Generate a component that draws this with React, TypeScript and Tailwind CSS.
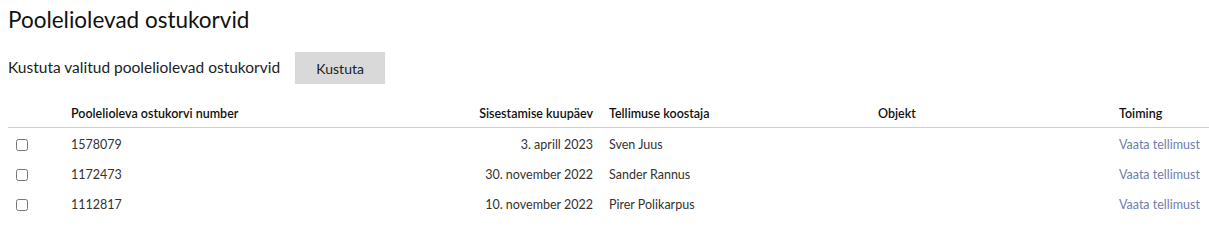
const rows = [
  { id: '1578079', date: '3. aprill 2023', author: 'Sven Juus' },
  { id: '1172473', date: '30. november 2022', author: 'Sander Rannus' },
  { id: '1112817', date: '10. november 2022', author: 'Pirer Polikarpus' },
];

const cols = 'grid grid-cols-[55px_330px_208px_269px_241px_1fr] whitespace-nowrap';

export default function App() {
  return (
    <div className="bg-white pl-2 pt-[6px] font-['Lato',sans-serif] text-[#222]">
      <h1 className="text-[22.5px] leading-[28px] text-[#111]">Pooleliolevad ostukorvid</h1>

      <div className="mt-[18px] flex items-center gap-[15px]">
        <span className="text-[15.5px]">Kustuta valitud pooleliolevad ostukorvid</span>
        <button className="h-8 w-[90px] bg-[#d9d9d9] text-[14px] text-[#222]">Kustuta</button>
      </div>

      <div className="mt-[17px]">
        <div className={`${cols} h-[27px] items-center border-b border-[#cfcfcf] text-[12.5px] font-semibold text-[#111]`}>
          <div />
          <div className="px-2">Poolelioleva ostukorvi number</div>
          <div className="px-2 text-right">Sisestamise kuupäev</div>
          <div className="px-2">Tellimuse koostaja</div>
          <div className="px-2">Objekt</div>
          <div className="px-2">Toiming</div>
        </div>
        <div className="pt-[2px]">
          {rows.map((r) => (
            <div key={r.id} className={`${cols} h-[30px] items-center text-[12.5px] text-[#333]`}>
              <div className="flex px-2">
                <input type="checkbox" className="m-0 h-[12px] w-[12px]" />
              </div>
              <div className="px-2">{r.id}</div>
              <div className="px-2 text-right">{r.date}</div>
              <div className="px-2">{r.author}</div>
              <div className="px-2" />
              <div className="px-2">
                <a href="#" className="text-[#6f7eae]">Vaata tellimust</a>
              </div>
            </div>
          ))}
        </div>
      </div>
    </div>
  );
}
